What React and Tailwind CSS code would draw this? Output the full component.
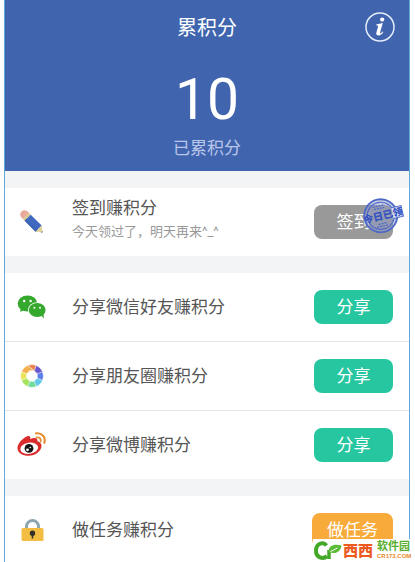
import React from 'react';
import clsx from 'clsx';

const InfoIcon = () => (
  <svg viewBox="0 0 30 30" className="size-[30px]" aria-hidden="true">
    <circle cx="15" cy="15" r="14" fill="none" stroke="#e6edfa" strokeWidth="1.5" />
    <circle cx="17.2" cy="7.6" r="2.1" fill="#fff" />
    <path
      d="M11.2 12.400c2.200-.2 4.200-.6 6.600-1.300l-2.700 9.500c-.3 1.100.5 1.100 1.100.5l1.300-1.500.8.5c-1.300 2.300-2.800 3.400-4.700 3.400-2 0-2.700-1.300-2.200-3.100l1.600-5.700c.3-1-.1-1.300-1.600-1.200z"
      fill="#fff"
    />
  </svg>
);

const PencilIcon = () => (
  <svg viewBox="0 0 30 30" className="size-[30px]" aria-hidden="true">
    <g transform="translate(7.5 7.5) rotate(45)">
      <path d="M2-4.300H0a4.300 4.300 0 0 0 0 8.600h2z" fill="#e9a99b" />
      <path d="M2-4.300h2.500v8.600H2z" fill="#d9c58f" />
      <path d="M4.500-4.300H20v8.600H4.500z" fill="#4169c0" />
      <path d="M4.500 1.500H20v2.800H4.500z" fill="#3d65bb" />
      <path d="M20-4.300L25.500 0l-5.500 4.300z" fill="#e3d19c" />
      <path d="M24.300-1L25.500 0l-1.200 1z" fill="#4b4d55" />
    </g>
  </svg>
);

const WechatIcon = () => (
  <svg viewBox="0 0 30 30" className="size-[30px]" aria-hidden="true">
    <path d="M4 15l-.8 5 5-2.600z" fill="#35a92d" />
    <ellipse cx="10.500" cy="11.500" rx="9.800" ry="8" fill="#35a92d" />
    <circle cx="7.200" cy="9" r="1.200" fill="#fff" />
    <circle cx="13.600" cy="9" r="1.200" fill="#fff" />
    <ellipse cx="20.200" cy="18" rx="9.200" ry="7.700" fill="#fff" />
    <path d="M23.500 23l3.500 3.400-.8-5.400z" fill="#35a92d" />
    <ellipse cx="20.200" cy="18" rx="8.400" ry="6.900" fill="#35a92d" />
    <circle cx="17.400" cy="15.800" r="1" fill="#fff" />
    <circle cx="23" cy="15.800" r="1" fill="#fff" />
  </svg>
);

const blades = ['#e8804f', '#6a55cf', '#5b7fe6', '#5fc8ea', '#6fdc9c', '#a5e35c', '#e9e35a', '#f2b04e'];

const MomentsIcon = () => (
  <svg viewBox="0 0 30 30" className="size-[30px]" aria-hidden="true">
    {blades.map((color, i) => (
      <path
        key={color}
        d="M10.600 4.400A11.500 11.500 0 0 1 19.400 4.400L20.300 12.800L17.200 9.700L12.800 9.700z"
        transform={`rotate(${i * 45} 15 15)`}
        fill={color}
        stroke="#fff"
        strokeWidth="0.6"
      />
    ))}
  </svg>
);

const WeiboIcon = () => (
  <svg viewBox="0 0 30 30" className="size-[30px]" aria-hidden="true">
    <path
      d="M10.200 6.200c2-.9 3.600.1 3.100 2.900 2.900-1.500 7.800-2 7.200 2.200 2.700.9 4.300 2.500 4 5.200-.6 4.900-6.500 9.300-12.700 9.300C5.600 25.800.5 22.900.5 17.900c0-4.400 5.500-10 9.700-11.700z"
      fill="#d92b2b"
    />
    <ellipse cx="12.200" cy="18.300" rx="9" ry="5.600" fill="#fff" transform="rotate(-8 12 18.300)" />
    <circle cx="12" cy="18.400" r="4.400" fill="#161616" />
    <circle cx="10.500" cy="19.800" r="1.400" fill="#fff" />
    <circle cx="13.300" cy="17.500" r=".8" fill="#fff" />
    <path d="M19 3.400c6-1 10.100 4 8.300 9.400" fill="none" stroke="#e88f35" strokeWidth="2.200" strokeLinecap="round" />
    <path d="M19.500 7.500c3.200-.5 4.900 1.600 4.100 4.100" fill="none" stroke="#e88f35" strokeWidth="1.900" strokeLinecap="round" />
  </svg>
);

const LockIcon = () => (
  <svg viewBox="0 0 30 30" className="size-[30px]" aria-hidden="true">
    <path d="M9.500 14v-2.500a6 6 0 0 1 12 0V14" fill="none" stroke="#8ea6b1" strokeWidth="3" />
    <rect x="4.500" y="13" width="22" height="13" rx="1.500" fill="#f2bd42" />
    <circle cx="15.500" cy="18.300" r="2.700" fill="#33302a" />
    <path d="M14.700 19h1.600v4.500h-1.600z" fill="#33302a" />
  </svg>
);

const Stamp = () => (
  <div className="absolute -top-2 -right-[14px] h-10 w-12">
    <svg viewBox="0 0 48 40" className="size-full" aria-hidden="true">
      <g transform="rotate(-13 21 20)" fill="none" stroke="#4f69c8">
        <circle cx="22" cy="19" r="16.500" fill="#8f9cc8" fillOpacity=".5" strokeWidth="1.800" />
        <circle cx="22" cy="19" r="13.500" strokeWidth="1.200" />
        <path d="M16 9h12M17 11.500h10M16 29.500h12M18 27h8" strokeWidth="1.300" strokeDasharray="2 1" />
        <path d="M34 13.500h10v11H34" fill="#dde3f7" strokeWidth="1" />
      </g>
    </svg>
    <span className="absolute inset-x-0 top-[11px] -rotate-[13deg] text-center text-[10px] leading-4 font-black whitespace-nowrap text-[#3553c2]">
      今日已领
    </span>
  </div>
);

const Row = ({ icon: Icon, title, note, action, tone, children }) => (
  <li className="flex min-h-[68px] items-center bg-white pr-4 pl-3">
    <Icon />
    <div className={clsx('ml-[25px] flex-1', note && 'pb-1')}>
      <h2 className="text-[17px] leading-6 text-[#555]">{title}</h2>
      {note && <p className="text-[13px] leading-6 text-[#999]">{note}</p>}
    </div>
    <div className="relative">
      <button
        type="button"
        className={clsx('h-[34px] min-w-[79px] rounded-lg px-[15px] text-[17px] leading-6 text-white', tone)}
      >
        {action}
      </button>
      {children}
    </div>
  </li>
);

const Watermark = () => (
  <a
    href="#cr173"
    className="fixed right-0 bottom-0 flex h-[23px] w-[102px] items-center bg-white"
  >
    <svg viewBox="0 0 30 22" className="h-[22px] w-[30px] shrink-0" aria-hidden="true">
      <path d="M13.500 5.500C10 1.200 3.200 3.500 3 10.500c-.1 7 7 9.500 11 5.500" fill="none" stroke="#43a828" strokeWidth="4" />
      <path d="M16 19v-9" fill="none" stroke="#43a828" strokeWidth="3.500" />
      <path d="M15.500 12c0-6 5-8.500 13-6.500C28 11 23 14.500 18 12.500z" fill="#5cbc35" />
      <path d="M17.500 11.500l7-3.500" stroke="#fff" strokeWidth="1" />
    </svg>
    <span className="text-[15px] leading-5 font-black text-[#ec5a1e]">西西</span>
    <span className="ml-1 flex flex-col text-[#58ad2c]">
      <span className="text-[11px] leading-[12px] font-bold">软件园</span>
      <span className="font-['Liberation_Sans',sans-serif] text-[6px] leading-[7px] font-bold text-[#e88a2c]">
        CR173.COM
      </span>
    </span>
  </a>
);

function App() {
  return (
    <div className="h-screen overflow-hidden bg-white pr-[5px] pl-1 font-[Roboto,'Noto_Sans_CJK_SC',sans-serif]">
      <main className="min-h-full border-x border-[#62a9db] bg-[#f2f4f6]">
        <header className="relative flex h-[171px] flex-col items-center bg-[#4065ae] pt-3 text-white">
          <h1 className="text-[20px] leading-8">累积分</h1>
          <button type="button" aria-label="积分说明" className="absolute top-3 right-[14px]">
            <InfoIcon />
          </button>
          <p className="mt-6 text-[57px] leading-[64px]">10</p>
          <p className="mt-1 text-[17px] leading-6 text-[#bac6ea]">已累积分</p>
        </header>

        <ul className="mt-[17px]">
          <Row icon={PencilIcon} title="签到赚积分" note="今天领过了，明天再来^_^" action="签到" tone="bg-[#999]">
            <Stamp />
          </Row>
        </ul>

        <ul className="mt-[17px] flex flex-col gap-px bg-[#e2e5e7]">
          <Row icon={WechatIcon} title="分享微信好友赚积分" action="分享" tone="bg-[#26c6a0]" />
          <Row icon={MomentsIcon} title="分享朋友圈赚积分" action="分享" tone="bg-[#26c6a0]" />
          <Row icon={WeiboIcon} title="分享微博赚积分" action="分享" tone="bg-[#26c6a0]" />
        </ul>

        <ul className="mt-[17px]">
          <Row icon={LockIcon} title="做任务赚积分" action="做任务" tone="bg-[#f8ab3b]" />
        </ul>
      </main>
      <Watermark />
    </div>
  );
}

export default App;
